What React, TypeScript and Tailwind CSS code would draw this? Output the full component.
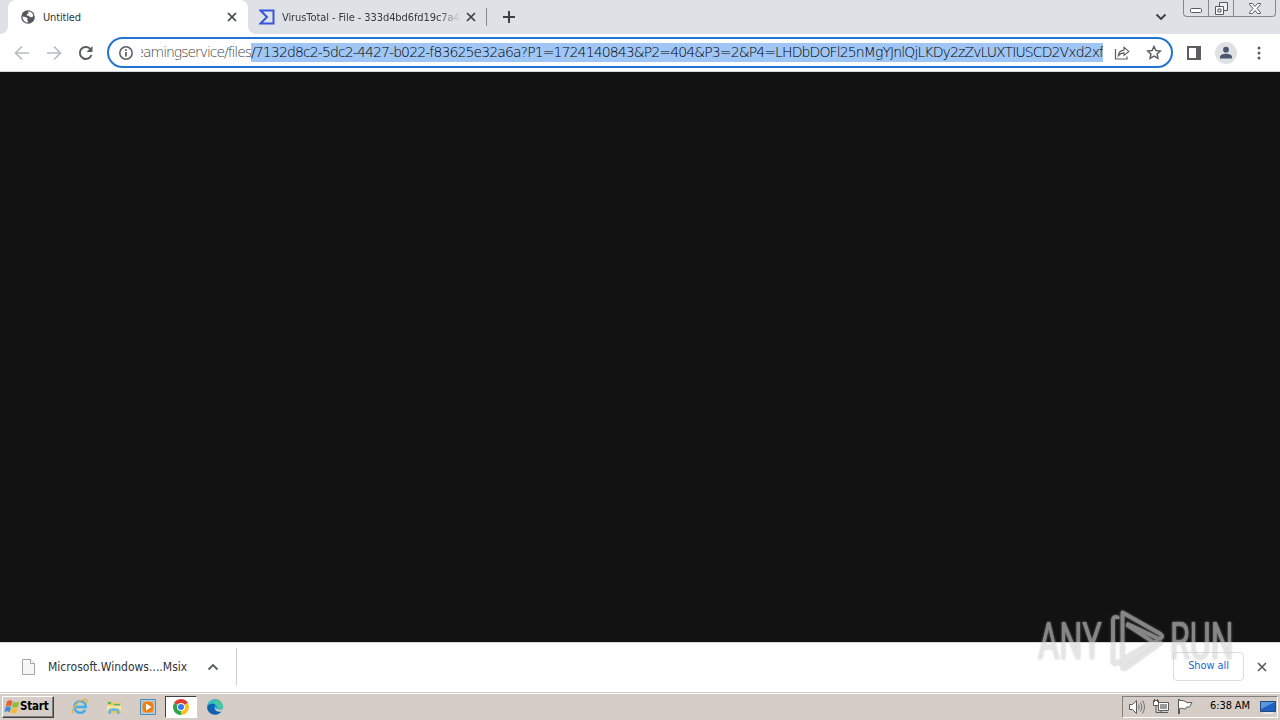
import type { ReactNode } from 'react';

const SELECTED_URL =
  '/7132d8c2-5dc2-4427-b022-f83625e32a6a?P1=1724140843&P2=404&P3=2&P4=LHDbDOFl25nMgYJnlQjLKDy2zZvLUXTIUSCD2Vxd2xf6';

function CloseIcon({ className = '' }: { className?: string }) {
  return (
    <svg width="10" height="10" viewBox="0 0 10 10" className={className}>
      <path d="M1 1l8 8M9 1L1 9" stroke="currentColor" strokeWidth="1.7" fill="none" />
    </svg>
  );
}

function TabStrip() {
  return (
    <div className="flex h-[34px] items-start bg-[#dee1e6] pl-2">
      <div className="relative flex h-[34px] w-[240px] items-center rounded-t-lg bg-white pl-[13px]">
        <svg className="absolute bottom-0 -left-2" width="8" height="8" viewBox="0 0 8 8">
          <path d="M8 0v8H0a8 8 0 008-8z" fill="#fff" />
        </svg>
        <svg className="absolute -right-2 bottom-0" width="8" height="8" viewBox="0 0 8 8">
          <path d="M0 0v8h8a8 8 0 01-8-8z" fill="#fff" />
        </svg>
        <svg width="14" height="14" viewBox="0 0 14 14">
          <circle cx="7" cy="7" r="6.8" fill="#54585d" />
          <path d="M1.5 6.5l3 .4 2.3 1.4-.6 1.5 1 2.8C4 12.6 1.4 10 1.5 6.5zM7 1.6c2.8-.2 4.800 1.700 5.400 4.200l-1.300 1.500-2.200-.2-1.100-1.400-2.300-.3.800-1.600 1.500-.4z" fill="#fff" />
        </svg>
        <span className="mt-[2px] ml-2 text-[11px] tracking-[-0.15px] text-[#303438]">Untitled</span>
        <CloseIcon className="absolute left-[219px] text-[#3c4043]" />
      </div>
      <div className="flex h-[34px] w-[238px] items-center pl-[11px]">
        <svg width="16" height="16" viewBox="0 0 16 16">
          <path d="M1.5 1.5h13v13h-13L8 8z" fill="none" stroke="#3556df" strokeWidth="2" />
        </svg>
        <span className="mt-[2px] ml-[7px] w-[178px] overflow-hidden mask-r-from-88% text-[11px] tracking-[-0.08px] whitespace-nowrap text-[#35393d]">
          VirusTotal - File - 333d4bd6fd19c7a4e
        </span>
        <CloseIcon className="ml-[6px] shrink-0 text-[#3c4043]" />
      </div>
      <div className="mt-[8px] h-[18px] w-px bg-[#85888d]" />
      <svg className="mt-[10px] ml-[15px]" width="14" height="14" viewBox="0 0 14 14">
        <path d="M7 1v12M1 7h12" stroke="#3c4043" strokeWidth="2" />
      </svg>
      <svg className="mt-[13px] ml-auto" width="12" height="8" viewBox="0 0 12 8">
        <path d="M1.5 1.5L6 6l4.500-4.500" fill="none" stroke="#3c4043" strokeWidth="1.900" />
      </svg>
      <div className="mr-[4px] ml-[16px] flex h-[17px] w-[93px] rounded-b-[4px] border border-t-0 border-[#85898f] text-[#555a60]">
        <div className="flex w-[25px] justify-center border-r border-[#85898f] pt-[8px]">
          <svg width="12" height="5" viewBox="0 0 12 5">
            <rect x=".5" y=".5" width="11" height="4" rx="1" fill="#fff" stroke="currentColor" />
          </svg>
        </div>
        <div className="flex w-[25px] justify-center border-r border-[#85898f] pt-[2px]">
          <svg width="13" height="13" viewBox="0 0 13 13">
            <path d="M4.500.5h8v8h-8z" fill="#eee" stroke="currentColor" />
            <path d="M.5 4.500h8v8h-8z" fill="#fff" stroke="currentColor" />
            <path d="M3 7h3v3H3z" fill="#eee" stroke="currentColor" />
          </svg>
        </div>
        <div className="flex flex-1 justify-center pt-[3px]">
          <svg width="12" height="11" viewBox="0 0 12 11">
            <path d="M.5.5h3L6 3.500 8.500.5h3v1L8 5.500l3.500 4v1h-3L6 7.500l-2.500 3h-3v-1L4 5.500.500 1.500z" fill="#fff" stroke="currentColor" />
          </svg>
        </div>
      </div>
    </div>
  );
}

function Toolbar() {
  return (
    <div className="flex h-[38px] items-center border-b border-[#d5d7da] bg-white pl-[14px] text-[#5a5e63]">
      <svg width="16" height="16" viewBox="0 0 16 16" className="text-[#b9bbbe]">
        <path d="M15 8H2M8 1.500L1.500 8 8 14.500" fill="none" stroke="currentColor" strokeWidth="1.700" />
      </svg>
      <svg width="16" height="16" viewBox="0 0 16 16" className="ml-4 text-[#b9bbbe]">
        <path d="M1 8h13M8 1.500L14.500 8 8 14.500" fill="none" stroke="currentColor" strokeWidth="1.700" />
      </svg>
      <svg width="16" height="16" viewBox="0 0 16 16" className="ml-4">
        <path d="M13.500 10A6 6 0 1112 3.600l1 1" fill="none" stroke="currentColor" strokeWidth="2" />
        <path d="M14.500 1v6h-6z" fill="currentColor" />
      </svg>
      <div className="ml-[13px] flex h-[31px] w-[1066px] items-center rounded-full border-2 border-[#2373d2] pl-[10px]">
        <svg width="14" height="14" viewBox="0 0 14 14">
          <circle cx="7" cy="7" r="6.200" fill="none" stroke="currentColor" strokeWidth="1.500" />
          <path d="M7 6v4.500M7 3.300v1.600" stroke="currentColor" strokeWidth="1.700" />
        </svg>
        <div className="ml-[8px] flex h-[19px] w-[110px] items-center justify-end overflow-hidden font-['DejaVu_Sans'] text-[14px] font-extralight tracking-[-1.05px] whitespace-nowrap text-[#3c4043]">
          <span>eamingservice/files</span>
        </div>
        <div className="flex h-[19px] w-[852px] items-center overflow-hidden bg-[#9fc6f5] font-['DejaVu_Sans'] text-[14px] font-extralight tracking-[-0.89px] whitespace-nowrap text-black">
          <span>{SELECTED_URL}</span>
        </div>
        <svg className="ml-[11px] shrink-0" width="16" height="14" viewBox="0 0 16 14">
          <path d="M1.500 3v10h11.500v-2.500" fill="none" stroke="currentColor" strokeWidth="1.200" />
          <path d="M4.200 10C4.600 6.500 6.500 4.300 10 4.100V1.300L14.800 5.400 10 9.400V6.900C7.500 6.900 5.800 8 4.200 10z" fill="none" stroke="currentColor" strokeWidth="1.100" />
        </svg>
        <svg className="ml-[16px] shrink-0" width="16" height="15" viewBox="0 0 16 15">
          <path d="M8 1.500l1.900 4 4.400.5-3.200 3 .8 4.400L8 11.200l-3.900 2.200.8-4.400-3.200-3 4.400-.5z" fill="none" stroke="currentColor" strokeWidth="1.500" />
        </svg>
      </div>
      <svg className="ml-[14px]" width="14" height="14" viewBox="0 0 14 14">
        <path d="M1 1h12v12H1z" fill="none" stroke="currentColor" strokeWidth="2" />
        <path d="M9 1h4v12H9z" fill="currentColor" />
      </svg>
      <svg className="ml-[14px]" width="22" height="22" viewBox="0 0 22 22">
        <circle cx="11" cy="11" r="11" fill="#dfe1e5" />
        <circle cx="11" cy="7.700" r="2.900" fill="#4a5771" />
        <path d="M5 16.500v-1.600c0-2.200 3.200-3.200 6-3.200s6 1 6 3.200v1.600z" fill="#4a5771" />
      </svg>
      <svg className="ml-[20px]" width="4" height="14" viewBox="0 0 4 14" fill="currentColor">
        <circle cx="2" cy="2" r="1.500" />
        <circle cx="2" cy="7" r="1.500" />
        <circle cx="2" cy="12" r="1.500" />
      </svg>
    </div>
  );
}

function DownloadBar() {
  return (
    <div className="flex h-[50px] items-center border-t border-[#d5d7da] bg-white pb-[2px] pl-[22px]">
      <svg width="13" height="16" viewBox="0 0 13 16">
        <path d="M.5.5h8l4 4v11H.5z" fill="#f7f7f7" stroke="#a5a5a5" />
        <path d="M8.500.5v4h4" fill="#fff" stroke="#a5a5a5" />
      </svg>
      <span className="ml-[13px] w-[140px] text-[12px] tracking-[0.02px] whitespace-nowrap text-[#303438]">
        Microsoft.Windows....Msix
      </span>
      <svg className="ml-[19px]" width="12" height="8" viewBox="0 0 12 8">
        <path d="M1.500 6.500L6 2l4.500 4.500" fill="none" stroke="#5a5e63" strokeWidth="1.900" />
      </svg>
      <div className="ml-[17px] h-[38px] w-px bg-[#cfd1d4]" />
      <button className="mr-[13px] ml-auto h-[29px] w-[71px] rounded-[4px] border border-[#dadce0] text-[11px] tracking-[-0.1px] whitespace-nowrap text-[#1967d2]">
        Show all
      </button>
      <CloseIcon className="mr-[13px] text-[#5a5e63]" />
    </div>
  );
}

function Watermark() {
  return (
    <div className="absolute top-[608px] left-[1038px] flex h-[66px] w-[195px] items-center font-[Roboto] text-[51px] leading-[66px] text-[#d4d4d4] opacity-60 drop-shadow-[0_0_1px_#aaa]">
      <div className="w-[67px] pt-[2px]">
        <div className="w-max origin-left scale-x-[0.64] text-shadow-[0_0_1px_#d4d4d4]">ANY</div>
      </div>
      <svg className="shrink-0" width="60" height="66" viewBox="0 0 60 66" fill="none" stroke="currentColor" strokeWidth="3.800" strokeLinejoin="round">
        <path d="M12.500 11V9.300Q8 8 8 12v40Q8 58 13 54.500L48 34" />
        <path d="M17.500 49V4.500L55.500 26Q59 29 55 30.500 53 31 50 29L21.500 15.500" />
        <path d="M22 17l26 17M57 34L21 60Q17 62 17 57l4-3 32-22" />
      </svg>
      <div className="ml-[5px] w-[63px] pt-[2px]">
        <div className="w-max origin-left scale-x-[0.63] text-shadow-[0_0_1px_#d4d4d4]">RUN</div>
      </div>
    </div>
  );
}

function TaskIcon({ children }: { children: ReactNode }) {
  return <div className="flex h-[22px] w-[34px] items-center justify-center">{children}</div>;
}

function Taskbar() {
  return (
    <div className="flex h-[28px] items-center border-t border-[#d6cec6] bg-[#d6cec6] pl-[2px] shadow-[inset_0_1px_0_#fff]">
      <div className="flex h-[22px] w-[52px] items-center border border-t-white border-r-[#404040] border-b-[#404040] border-l-white pl-[1px] shadow-[inset_-1px_-1px_0_#808080]">
        <svg width="17" height="16" viewBox="0 0 17 16" className="-mr-px shrink-0">
          <path d="M3 2.500c2-1.500 3.500-1.500 5.500-.2L7.200 7.300c-2-1.200-3.600-1-5.500.2z" fill="#e8602c" />
          <path d="M9.300 2.700c2 1.200 4 1 6.200-.2L14 7.700c-2.200 1.200-4 1.200-6 0z" fill="#8cbd35" />
          <path d="M1.500 8.200c2-1.300 3.600-1.300 5.500 0l-1.300 5c-2-1.300-3.600-1.200-5.400 0z" fill="#3d8edb" />
          <path d="M7.700 8.600c2 1.200 4 1.200 6.100 0l-1.400 5c-2 1.200-4 1.200-6 0z" fill="#f5bc32" />
        </svg>
        <span className="text-[11.5px] font-bold tracking-[-0.2px] text-black">Start</span>
      </div>
      <div className="ml-[9px] flex">
        <TaskIcon>
          <svg width="18" height="17" viewBox="0 0 18 17" fill="none">
            <path d="M14.300 11.800A5.800 5.800 0 119.300 3.200c3.500 0 5.400 2.500 5.400 5.800H5" stroke="#46aee6" strokeWidth="2.600" />
            <path d="M2.500 15.500C-.5 13.500 5 4 12.500 1.600c4-1.200 4 1.400 2.700 3.900" stroke="#ddb64b" strokeWidth="1.400" />
          </svg>
        </TaskIcon>
        <TaskIcon>
          <svg width="16" height="16" viewBox="0 0 16 16">
            <path d="M1 2h5l1 2h8v10H1z" fill="#e8c760" />
            <path d="M2 3h3v2H2zM8 5h6v2H8z" fill="#5db46c" />
            <path d="M1 6.500h14V12H1z" fill="#f8e69e" />
            <path d="M2.500 15v-4c0-2.500 11-2.500 11 0v4H11v-3H5v3z" fill="#6bb5df" />
          </svg>
        </TaskIcon>
        <TaskIcon>
          <svg width="16" height="16" viewBox="0 0 16 16">
            <path d="M.5.5h15v15H.5z" fill="#a8d4ef" stroke="#4e8ab6" />
            <path d="M2.500 2.500h11v11h-11z" fill="#f49a39" />
            <circle cx="8" cy="8" r="5.500" fill="#f07d12" />
            <path d="M6 4.500l5.500 3.500L6 11.500z" fill="#fff" />
          </svg>
        </TaskIcon>
        <div className="flex h-[22px] w-[32px] items-center justify-center border border-t-[#404040] border-r-white border-b-white border-l-[#404040] bg-white">
          <svg width="16" height="16" viewBox="0 0 16 16">
            <path d="M8 8L1.100 4A8 8 0 0114.900 4z" fill="#e33b2e" />
            <path d="M8 8l6.900-4A8 8 0 018 16z" fill="#fbc116" />
            <path d="M8 8v8A8 8 0 011.100 4z" fill="#2da14c" />
            <circle cx="8" cy="8" r="4" fill="#fff" />
            <circle cx="8" cy="8" r="3" fill="#3979e8" />
          </svg>
        </div>
        <div className="ml-px">
          <TaskIcon>
            <svg width="16" height="16" viewBox="0 0 16 16">
              <circle cx="8" cy="8" r="7.800" fill="#1684d1" />
              <path d="M.5 6C2-1 14-1 15.800 7c0 3-3 4-6 3 1-3-2-6-9.300-4z" fill="#36bfc0" />
              <path d="M9 .3c4 0 6.500 3 6.800 6.700 0 3-3 4-6 3C11 7 10 5 7 4z" fill="#55cc8c" opacity=".6" />
              <path d="M.3 8C2 4 7 4 8.500 6c-4 2-1 7 5.500 7C9 18 0 15 .3 8z" fill="#1062b1" />
              <path d="M9 7c-1 1 0 4 5 3.500l1.500-1V12C11 14 6 11 9 7z" fill="#d6cec6" />
            </svg>
          </TaskIcon>
        </div>
      </div>
      <div className="mr-[2px] ml-auto flex h-[22px] w-[156px] items-center border border-t-[#808080] border-r-white border-b-white border-l-[#808080] pl-[6px] text-[#5a5a5a]">
        <svg width="17" height="14" viewBox="0 0 17 14" fill="none" stroke="currentColor">
          <path d="M.5 4.500h3l4-4v13l-4-4h-3z" fill="#fff" />
          <path d="M9.500 4.500q1.500 2.500 0 5M11.500 2.500q3 4.500 0 9M13.500.5q4 6.500 0 13" strokeWidth=".8" />
        </svg>
        <svg className="ml-[7px]" width="17" height="15" viewBox="0 0 17 15" fill="none" stroke="currentColor">
          <path d="M5.500 3.500h10v8h-10z" fill="#fff" />
          <path d="M7 5h7v5H7z" fill="#999" stroke="none" />
          <path d="M.5 1.500h5v5h-5z" fill="#fff" />
          <path d="M1.500 0v3M4.500 0v3M3 6.500v7h12M8 12v2" />
        </svg>
        <svg className="ml-[7px]" width="17" height="15" viewBox="0 0 17 15" stroke="currentColor" fill="#fff">
          <path d="M1.500 0v15h1V9.500c3-1 4 1 6 .5l1-2h3L15 3.500l-5 .2c-2-1.700-4-2.700-7.500-2.200V0z" />
        </svg>
        <span className="ml-[16px] w-[42px] text-[11px] tracking-[-0.1px] whitespace-nowrap text-black">6:38 AM</span>
        <svg className="ml-[8px] shrink-0" width="16" height="14" viewBox="0 0 16 14">
          <path d="M.5 1.500h15v10H.5z" fill="#1f61be" stroke="#24477c" />
          <path d="M1 2h14L1 9z" fill="#5897df" />
          <path d="M3 13h10" stroke="#e9eef5" strokeWidth="1.500" />
        </svg>
      </div>
    </div>
  );
}

function App() {
  return (
    <div className="relative flex h-[720px] w-[1280px] flex-col overflow-hidden bg-[#121212] font-['DejaVu_Sans_Condensed','DejaVu_Sans',sans-serif]">
      <TabStrip />
      <Toolbar />
      <main className="flex-1 bg-[#121212]" />
      <DownloadBar />
      <Taskbar />
      <Watermark />
    </div>
  );
}

export default App;
